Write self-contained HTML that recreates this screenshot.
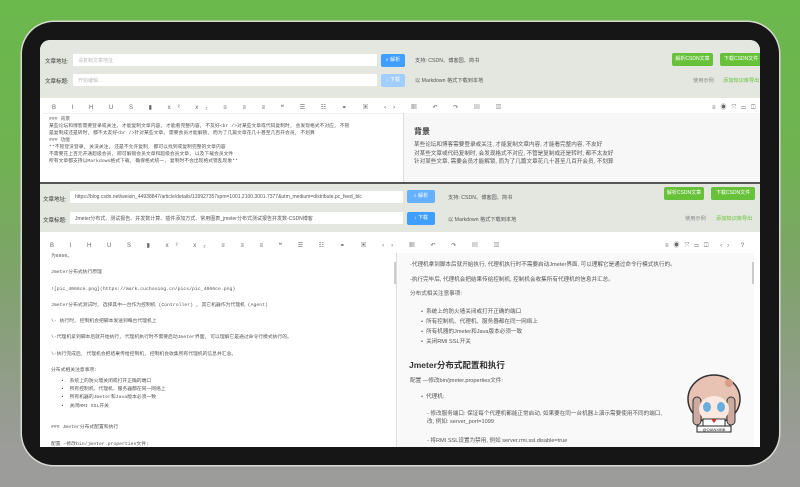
<!DOCTYPE html>
<html><head><meta charset="utf-8"><style>
*{margin:0;padding:0;box-sizing:border-box}
body{width:800px;height:487px;overflow:hidden;position:relative;font-family:"Liberation Sans","Noto Sans CJK SC",sans-serif;background:linear-gradient(180deg,#6bb84d 0%,#6fb350 30%,#7ea46a 55%,#8f9d85 75%,#9c9c9a 92%,#9c9c9a 100%)}
.a{position:absolute}
.dev{left:22px;top:22px;width:757px;height:443px;background:#161616;border-radius:32px;box-shadow:0 0 0 1.5px #d8d8d4}
.scr{left:40px;top:40px;width:720px;height:407px;background:#fff;border-radius:10px 10px 0 0;overflow:hidden}
.panel{background:#e3e7df}
.lbl{font-size:5.5px;color:#333}
.inp{background:#fff;height:12px;border-radius:1px;font-size:5px;color:#bbb;padding:3px 5px;white-space:nowrap;overflow:hidden}
.btnb{background:#409eff;color:#fff;font-size:5px;height:13px;border-radius:2px;text-align:center;line-height:13px}
.btng{background:#67c23a;color:#fff;font-size:5px;height:13px;border-radius:2px;text-align:center;line-height:13px}
.t{font-size:5.2px;color:#555;white-space:nowrap}
.tb{font-size:6px;color:#666;letter-spacing:7px;white-space:nowrap}
.code{font-family:"Liberation Mono","Noto Sans CJK SC",monospace;font-size:4.8px;color:#555;line-height:7px;white-space:nowrap}
.pv{font-size:5.6px;color:#555;white-space:nowrap}
</style></head><body>
<div class="a dev"></div>
<div class="a scr">
 <div class="a panel" style="left:0;top:0;width:720px;height:58px"></div>
 <div class="a lbl" style="left:5px;top:17px">文章地址:</div>
 <div class="a inp" style="left:33px;top:14px;width:304px">请复制文章地址</div>
 <div class="a btnb" style="left:341px;top:14px;width:24px">⌕ 解析</div>
 <div class="a t" style="left:375px;top:17px">支持: CSDN、博客园、简书</div>
 <div class="a btng" style="left:632px;top:13px;width:41px">解析CSDN文章</div>
 <div class="a btng" style="left:680px;top:13px;width:42px">下载CSDN文件</div>
 <div class="a lbl" style="left:5px;top:37px">文章标题:</div>
 <div class="a inp" style="left:33px;top:34px;width:304px">开始编辑...</div>
 <div class="a btnb" style="left:341px;top:34px;width:24px;background:#a0cfff">↓ 下载</div>
 <div class="a t" style="left:375px;top:37px">以 Markdown 格式下载到本地</div>
 <div class="a t" style="left:653px;top:37px;color:#888">使用示例</div>
 <div class="a t" style="left:683px;top:37px;color:#67c23a">添加知识库导出</div>
 <div class="a" style="left:0;top:58px;width:720px;height:85px;background:#fff"></div>
 <div class="a tb" style="left:12px;top:62px">B I H U S ▮ x² x₂ ≡ ≡ ≡ ❝ ☰ ☷ ⚭ ▣ ‹› ▦ ↶ ↷ ▤ ▥</div>
 <div class="a tb" style="left:672px;top:62px;letter-spacing:5px">≡◉⤧▭◫ ‹› ?</div>
 <div class="a" style="left:3px;top:73px;width:360px;height:70px;border-top:1px solid #eee"></div>
 <div class="a code" style="left:9px;top:76px">### 背景<br>某些论坛和博客需要登录或关注, 才能复制文章内容, 才能看完整内容, 不友好&lt;br /&gt;对某些文章或代码复制时, 会发现格式不对应, 不管<br>是复制成还是转时, 都不太友好&lt;br /&gt;针对某些文章, 需要会员才能解锁, 而为了几篇文章花几十甚至几百开会员, 不划算<br>### 功能<br>**不管登没登录, 关没关注, 还是不允许复制, 都可以找到或复制完整的文章内容<br>不需要花上百元开通超级会员, 即可解锁会员文章和超级会员文章, 以及下载会员文件<br>所有文章都支持以Markdown格式下载, 确保格式统一, 复制时不会出现格式错乱现象**</div>
 <div class="a" style="left:363px;top:73px;width:357px;height:70px;background:#f7f7f7;border-left:1px solid #ddd"></div>
 <div class="a" style="left:374px;top:86px;font-size:8px;font-weight:bold;color:#333">背景</div>
 <div class="a pv" style="left:374px;top:101px;line-height:8.5px">某些论坛和博客需要登录或关注, 才能复制文章内容, 才能看完整内容, 不友好<br>对某些文章或代码复制时, 会发现格式不对应, 不管是复制成还是转时, 都不太友好<br>针对某些文章, 需要会员才能解锁, 而为了几篇文章花几十甚至几百开会员, 不划算</div>
 <div class="a" style="left:0;top:142px;width:720px;height:2px;background:#555"></div>
 <div class="a panel" style="left:0;top:144px;width:720px;height:48px"></div>
 <div class="a lbl" style="left:3px;top:155px">文章地址:</div>
 <div class="a inp" style="left:30px;top:151px;width:333px;color:#555">https://blog.csdn.net/weixin_44938847/article/details/139927357spm=1001.2100.3001.7377&amp;utm_medium=distribute.pc_feed_blc</div>
 <div class="a btnb" style="left:367px;top:150px;width:28px;background:#66b1ff">⌕ 解析</div>
 <div class="a t" style="left:408px;top:154px">支持: CSDN、博客园、简书</div>
 <div class="a btng" style="left:624px;top:147px;width:40px">解析CSDN文章</div>
 <div class="a btng" style="left:671px;top:147px;width:44px">下载CSDN文件</div>
 <div class="a lbl" style="left:3px;top:176px">文章标题:</div>
 <div class="a inp" style="left:30px;top:172px;width:333px;color:#555">Jmeter分布式、测试报告、并发数计算、插件添加方式、常用图表_jmeter分布式测试报告并发数-CSDN博客</div>
 <div class="a btnb" style="left:367px;top:172px;width:28px">↓ 下载</div>
 <div class="a t" style="left:408px;top:176px">以 Markdown 格式下载到本地</div>
 <div class="a t" style="left:645px;top:175px;color:#888">使用示例</div>
 <div class="a t" style="left:676px;top:175px;color:#67c23a">添加知识库导出</div>
 <div class="a" style="left:3px;top:192px;width:714px;height:215px;background:#fff"></div>
 <div class="a tb" style="left:10px;top:200px">B I H U S ▮ x² x₂ ≡ ≡ ≡ ❝ ☰ ☷ ⚭ ▣ ‹› ▦ ↶ ↷ ▤ ▥</div>
 <div class="a tb" style="left:625px;top:200px;letter-spacing:5px">≡◉⤧▭◫ ‹› ?</div>
 <div class="a code" style="left:11px;top:209px;line-height:16.3px">为8050。<br>Jmeter分布式执行原理<br>![pic_4066ce.png](https://mark.cuchooing.cn/pics/pic_4066ce.png)<br>Jmeter分布式测试时, 选择其中一台作为控制机 (Controller) , 其它机器作为代理机 (Agent)<br>\- 执行时, 控制机会把脚本发送到每台代理机上<br>\-代理机拿到脚本后就开始执行, 代理机执行时不需要启动Jmeter界面, 可以理解它是通过命令行模式执行的。<br>\-执行完成后, 代理机会把结果传给控制机, 控制机会收集所有代理机的信息并汇总。<br>分布式相关注意事项:</div>
 <div class="a code" style="left:21px;top:338px;line-height:8.2px">•&nbsp; 系统上的防火墙关闭或打开正确的端口<br>•&nbsp; 所有控制机、代理机、服务器都在同一网络上<br>•&nbsp; 所有机器的Jmeter和Java版本必须一致<br>•&nbsp; 关闭RMI SSL开关</div>
 <div class="a code" style="left:11px;top:379px;line-height:17px">### Jmeter分布式配置和执行<br>配置 —修改bin/jmeter.properties文件:</div>
 <div class="a" style="left:356px;top:213px;width:358px;height:194px;background:#f9f9f9;border-left:1px solid #ddd"></div>
 <div class="a" style="left:354px;top:222px;width:2px;height:22px;background:#ccc"></div>
 <div class="a" style="left:712px;top:222px;width:2px;height:22px;background:#ccc"></div>
 <div class="a pv" style="left:370px;top:218px;line-height:14.5px">-代理机拿到脚本后就开始执行, 代理机执行时不需要启动Jmeter界面, 可以理解它是通过命令行模式执行的。<br>-执行完毕后, 代理机会把结果传给控制机, 控制机会收集所有代理机的信息并汇总。<br>分布式相关注意事项:</div>
 <div class="a pv" style="left:381px;top:267px;line-height:10px">•&nbsp; 系统上的防火墙关闭或打开正确的端口<br>•&nbsp; 所有控制机、代理机、服务器都在同一网络上<br>•&nbsp; 所有机器的Jmeter和Java版本必须一致<br>•&nbsp; 关闭RMI SSL开关</div>
 <div class="a" style="left:369px;top:319px;font-size:8.5px;font-weight:bold;color:#333">Jmeter分布式配置和执行</div>
 <div class="a pv" style="left:370px;top:336px">配置 —修改bin/jmeter.properties文件:</div>
 <div class="a pv" style="left:381px;top:352px">•&nbsp; 代理机:</div>
 <div class="a pv" style="left:387px;top:370px;line-height:8px">- 修改服务端口: 保证每个代理机都能正常启动, 如果要在同一台机器上演示需要使用不同的端口,<br>改, 例如: server_port=1099</div>
 <div class="a pv" style="left:387px;top:396px">- 将RMI SSL设置为禁用, 例如 server.rmi.ssl.disable=true</div>
 <svg class="a" style="left:645px;top:333px" width="58" height="62" viewBox="0 0 58 62">
  <ellipse cx="29" cy="26" rx="26" ry="24" fill="#e8c2b2" stroke="#333" stroke-width="1.5"/>
  <rect x="8" y="24" width="8" height="28" rx="4" fill="#ccaaa0" stroke="#333"/>
  <rect x="42" y="24" width="8" height="28" rx="4" fill="#ccaaa0" stroke="#333"/>
  <ellipse cx="29" cy="36" rx="15" ry="13" fill="#fbe9e0"/>
  <ellipse cx="22" cy="34" rx="4" ry="5" fill="#6aaee0"/>
  <ellipse cx="36" cy="34" rx="4" ry="5" fill="#6aaee0"/>
  <circle cx="44" cy="10" r="4" fill="#d99c86"/>
  <rect x="18" y="46" width="22" height="8" fill="#fff" stroke="#333"/>
  <path d="M26 46l3 4 3-4" fill="#c33"/>
  <rect x="12" y="53" width="34" height="6" fill="#fff" stroke="#222"/>
  <text x="29" y="58" font-size="4" text-anchor="middle" fill="#222" font-family="Liberation Sans">@QIANXIBB</text>
 </svg>
</div>
</body></html>
